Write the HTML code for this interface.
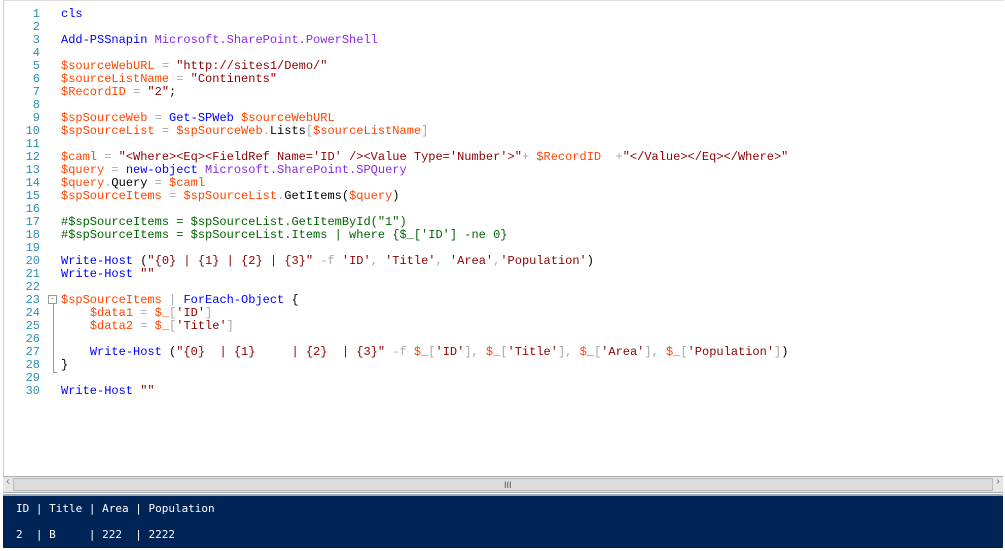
<!DOCTYPE html>
<html><head><meta charset="utf-8"><style>
body{margin:0;width:1005px;height:551px;background:#fff;position:relative;overflow:hidden;font-family:"Liberation Mono",monospace;}
#ed{position:absolute;left:3px;top:0;width:1000px;height:475px;border-left:1px solid #ccc;border-top:1px solid #ddd;}
.ln{position:absolute;left:0;top:8px;width:40px;text-align:right;color:#2b91af;font-size:12px;line-height:13px;white-space:pre;}
.code{position:absolute;left:61px;top:8px;font-size:12px;line-height:13px;white-space:pre;color:#000;}
.v{color:#ff4500}.s{color:#8b0000}.c{color:#0000ff}.t{color:#8a2be2}.o{color:#a9a9a9}.g{color:#006400}
#sb{position:absolute;left:3px;top:476px;width:1000px;height:15px;background:#e6e6e6;border-top:1px solid #aaa;border-bottom:1px solid #aaa;}
#thumb{position:absolute;left:10px;right:10px;top:1px;bottom:1px;background:#dcdcdc;border:1px solid #bbb;}
#con{position:absolute;left:3px;top:494px;width:1000px;height:52px;background:#012456;color:#fff;font-family:"DejaVu Sans Mono",monospace;font-size:11px;border-top:2px solid #9ab;white-space:pre;}
#fold{position:absolute;left:48px;top:295px;width:7px;height:7px;border:1px solid #999;font-size:8px;line-height:7px;text-align:center;color:#555;}
#foldline{position:absolute;left:53px;top:304px;width:3px;height:68px;border-left:1px solid #999;border-bottom:1px solid #999;}
</style></head><body>
<div id="ed"></div>
<div class="ln">1
2
3
4
5
6
7
8
9
10
11
12
13
14
15
16
17
18
19
20
21
22
23
24
25
26
27
28
29
30</div>
<div id="fold">-</div><div id="foldline"></div>
<div class="code"><span class="c">cls</span>

<span class="c">Add-PSSnapin</span> <span class="t">Microsoft.SharePoint.PowerShell</span>

<span class="v">$sourceWebURL</span> <span class="o">=</span> <span class="s">"http://sites1/Demo/"</span>
<span class="v">$sourceListName</span> <span class="o">=</span> <span class="s">"Continents"</span>
<span class="v">$RecordID</span> <span class="o">=</span> <span class="s">"2"</span>;

<span class="v">$spSourceWeb</span> <span class="o">=</span> <span class="c">Get-SPWeb</span> <span class="v">$sourceWebURL</span>
<span class="v">$spSourceList</span> <span class="o">=</span> <span class="v">$spSourceWeb</span><span class="o">.</span>Lists<span class="o">[</span><span class="v">$sourceListName</span><span class="o">]</span>

<span class="v">$caml</span> <span class="o">=</span> <span class="s">"&lt;Where&gt;&lt;Eq&gt;&lt;FieldRef Name='ID' /&gt;&lt;Value Type='Number'&gt;"</span><span class="o">+</span> <span class="v">$RecordID</span>  <span class="o">+</span><span class="s">"&lt;/Value&gt;&lt;/Eq&gt;&lt;/Where&gt;"</span>
<span class="v">$query</span> <span class="o">=</span> <span class="c">new-object</span> <span class="t">Microsoft.SharePoint.SPQuery</span>
<span class="v">$query</span><span class="o">.</span>Query <span class="o">=</span> <span class="v">$caml</span>
<span class="v">$spSourceItems</span> <span class="o">=</span> <span class="v">$spSourceList</span><span class="o">.</span>GetItems(<span class="v">$query</span>)

<span class="g">#$spSourceItems = $spSourceList.GetItemById("1")</span>
<span class="g">#$spSourceItems = $spSourceList.Items | where {$_['ID'] -ne 0}</span>

<span class="c">Write-Host</span> (<span class="s">"{0} | {1} | {2} | {3}"</span> <span class="o">-f</span> <span class="s">'ID'</span><span class="o">,</span> <span class="s">'Title'</span><span class="o">,</span> <span class="s">'Area'</span><span class="o">,</span><span class="s">'Population'</span>)
<span class="c">Write-Host</span> <span class="s">""</span>

<span class="v">$spSourceItems</span> <span class="o">|</span> <span class="c">ForEach-Object</span> {
    <span class="v">$data1</span> <span class="o">=</span> <span class="v">$_</span><span class="o">[</span><span class="s">'ID'</span><span class="o">]</span>
    <span class="v">$data2</span> <span class="o">=</span> <span class="v">$_</span><span class="o">[</span><span class="s">'Title'</span><span class="o">]</span>

    <span class="c">Write-Host</span> (<span class="s">"{0}  | {1}     | {2}  | {3}"</span> <span class="o">-f</span> <span class="v">$_</span><span class="o">[</span><span class="s">'ID'</span><span class="o">],</span> <span class="v">$_</span><span class="o">[</span><span class="s">'Title'</span><span class="o">],</span> <span class="v">$_</span><span class="o">[</span><span class="s">'Area'</span><span class="o">],</span> <span class="v">$_</span><span class="o">[</span><span class="s">'Population'</span><span class="o">]</span>)
}

<span class="c">Write-Host</span> <span class="s">""</span></div>
<div id="sb"><span style="position:absolute;left:2px;top:0;font-size:10px;color:#666">‹</span><div id="thumb"><span style="position:absolute;left:490px;top:1px;font-size:9px;color:#555;font-family:'Liberation Sans'">III</span></div><span style="position:absolute;right:2px;top:0;font-size:10px;color:#666">›</span></div>
<div id="con"><div style="position:absolute;left:13px;top:6px">ID | Title | Area | Population</div><div style="position:absolute;left:13px;top:32px">2  | B     | 222  | 2222</div></div>
</body></html>
